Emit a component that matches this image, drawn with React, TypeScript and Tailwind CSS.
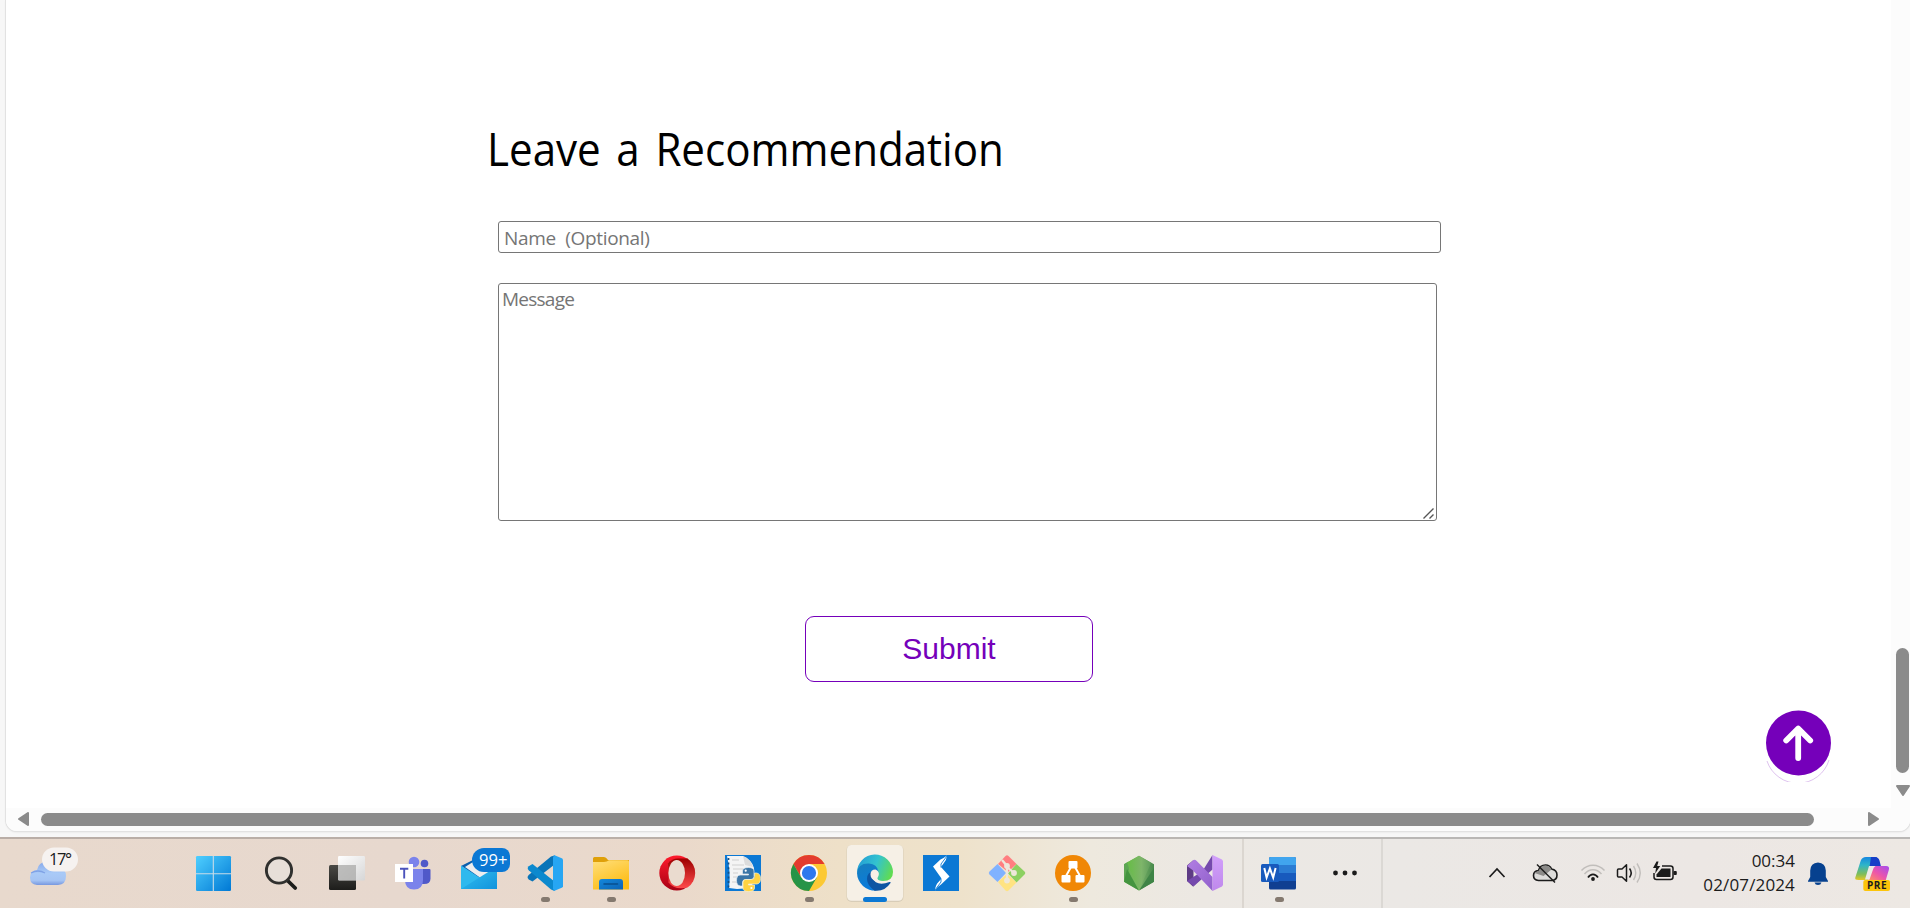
import type { ReactNode } from "react";

type Mark = "none" | "dot" | "bar";

function Cell({ x, mark = "none", active = false, children }: { x: number; mark?: Mark; active?: boolean; children: ReactNode }) {
  return (
    <svg className="h-[69px] w-[66px] shrink-0" viewBox={`${x} 839 66 69`}>
      {active && <rect x={x + 6.5} y="845" width="57" height="57" rx="5" fill="#d8cdb8" />}
      {active && <rect x={x + 7} y="845" width="56" height="55.800" rx="4.500" fill="#f6f0e6" />}
      {children}
      {mark === "dot" && <rect x={x + 31} y="897" width="9" height="5" rx="2.500" fill="#84796f" />}
      {mark === "bar" && <rect x={x + 23} y="897" width="24" height="5" rx="2.500" fill="#0b78d4" />}
    </svg>
  );
}

function Defs() {
  return (
    <svg className="absolute h-0 w-0">
      <defs>
        <linearGradient id="win" x1="0" y1="0" x2="1" y2="1" gradientUnits="objectBoundingBox"><stop stopColor="#4fcfff" /><stop offset="1" stopColor="#0078d4" /></linearGradient>
        <linearGradient id="tvd" x1="0" y1="0" x2="0" y2="1"><stop stopColor="#4a4945" /><stop offset="1" stopColor="#1d1d1b" /></linearGradient>
        <linearGradient id="tvl" x1="0" y1="0" x2="1" y2="1"><stop stopColor="#ffffff" /><stop offset="1" stopColor="#d6d6d6" /></linearGradient>
        <linearGradient id="cloud" x1="0" y1="0" x2="0" y2="1"><stop stopColor="#86a8ea" /><stop offset=".5" stopColor="#a9caf7" /><stop offset=".8" stopColor="#a5c4f4" /><stop offset="1" stopColor="#7798df" /></linearGradient>
        <linearGradient id="mail" x1="0" y1="0" x2="1" y2="1"><stop stopColor="#36c3f2" /><stop offset="1" stopColor="#1193dc" /></linearGradient>
        <linearGradient id="fold" x1="0" y1="0" x2="0.5" y2="1"><stop stopColor="#ffdf7b" /><stop offset="1" stopColor="#fdbd16" /></linearGradient>
        <linearGradient id="fblue" x1="0" y1="0" x2="1" y2="1"><stop stopColor="#1488dc" /><stop offset="1" stopColor="#0d63b4" /></linearGradient>
        <linearGradient id="opo" x1="0" y1="0" x2="0" y2="1"><stop stopColor="#ff1b2d" /><stop offset="1" stopColor="#a70014" /></linearGradient>
        <linearGradient id="opi" x1="0" y1="0" x2="0" y2="1"><stop stopColor="#9c0000" /><stop offset="1" stopColor="#ff4b4b" /></linearGradient>
        <linearGradient id="edt" x1="0" y1=".3" x2="1" y2=".6"><stop stopColor="#249ed5" /><stop offset=".5" stopColor="#33c3cf" /><stop offset="1" stopColor="#61dc50" /></linearGradient>
        <linearGradient id="edl" x1="0" y1="0" x2="0.3" y2="1"><stop stopColor="#177fbd" /><stop offset="1" stopColor="#0a7bdb" /></linearGradient>
        <linearGradient id="nod" x1="0" y1="0" x2="1" y2="0"><stop stopColor="#64b849" /><stop offset=".5" stopColor="#7eb56a" /><stop offset="1" stopColor="#47894b" /></linearGradient>
        <linearGradient id="nodm" x1="0" y1="0" x2="1" y2="0"><stop stopColor="#66bd45" /><stop offset=".6" stopColor="#7eb56a" /><stop offset="1" stopColor="#5f9c5b" /></linearGradient>
        <linearGradient id="vs" x1="0" y1="0" x2="0" y2="1"><stop stopColor="#d2a0fb" /><stop offset="1" stopColor="#bf88ec" /></linearGradient>
        <linearGradient id="vsx" x1="0" y1="0" x2="1" y2="1"><stop stopColor="#b17ee3" /><stop offset="1" stopColor="#9160cb" /></linearGradient>
        <linearGradient id="copa" x1="0" y1="0" x2="0" y2="1"><stop stopColor="#1687e0" /><stop offset=".35" stopColor="#2eb5c9" /><stop offset=".75" stopColor="#80bd58" /><stop offset="1" stopColor="#e6c725" /></linearGradient>
        <linearGradient id="copb" x1="1" y1="0" x2="0" y2="1"><stop stopColor="#a34cf0" /><stop offset=".55" stopColor="#ed55a9" /><stop offset="1" stopColor="#ff9061" /></linearGradient>
      </defs>
    </svg>
  );
}

function Weather() {
  return (
    <svg className="h-[69px] w-[180px] shrink-0" viewBox="0 839 180 69">
      <path d="M37 885q-7-.5-7-7.500t7-7.500q1.500-8 9.500-8.500 7 0 10 6.500 9.500-.5 9.500 8t-8 9z" fill="url(#cloud)" />
      <path d="M31 873q7-4 14 0" fill="none" stroke="#7fa2e6" strokeWidth="1.300" />
      <rect x="42" y="847.500" width="36" height="24" rx="12" fill="#f6f2f0" />
      <text x="49" y="865" fontSize="16.500" textLength="23" className="font-['Open_Sans',sans-serif]" fill="#1b1b1b">17°</text>
    </svg>
  );
}

function TaskbarApps() {
  return (
    <>
      <Cell x={180}>
        <rect x="196" y="856" width="35" height="35" rx="1.200" fill="url(#win)" />
        <path d="M213.300 856v35M196 873.800h35" stroke="#c8dce8" strokeWidth="1.100" />
      </Cell>
      <Cell x={246}>
        <path d="M287.500 880.500l7.700 7.500" stroke="#1d1d1b" strokeWidth="3.800" strokeLinecap="round" />
        <circle cx="279" cy="870.500" r="12.600" fill="#e7dfd8" stroke="#30302e" strokeWidth="2.900" />
      </Cell>
      <Cell x={312}>
        <rect x="329" y="865" width="27" height="25" rx="1.500" fill="url(#tvd)" />
        <rect x="338" y="856" width="27" height="24.500" rx="1.200" fill="url(#tvl)" />
        <rect x="338" y="865" width="18" height="15" fill="#a9a9a8" opacity=".75" />
      </Cell>
      <Cell x={378}>
        <circle cx="424.500" cy="863.500" r="3.800" fill="#5059c9" />
        <path d="M422 869h7.500q1 0 1 1v8.500q0 5.500-6.500 5.500h-2z" fill="#5059c9" />
        <circle cx="414" cy="862" r="5.300" fill="#7b83eb" />
        <path d="M405 869h18v11q0 9.500-9 9.500t-9-9.500z" fill="#7b83eb" />
        <rect x="395" y="864" width="18" height="18" fill="#fff" />
        <path d="M400 868.800h8.300M404.200 868v10.500" stroke="#4b53bc" strokeWidth="1.900" />
      </Cell>
      <Cell x={444}>
        <path d="M461 866l14-7h16l6 7-18 12z" fill="#0b5fae" />
        <path d="M465 867l8-5 22 4v6l-13 7z" fill="#ededee" />
        <path d="M461 865.500l36 23.500h-36z" fill="#2fb9ee" />
        <path d="M497 866.500v22.500h-36z" fill="url(#mail)" />
        <rect x="472" y="848" width="38" height="24" rx="12" fill="#0b78d4" />
        <rect x="490" y="848" width="20" height="24" rx="8" fill="#0b78d4" />
        <text x="479" y="866" fontSize="16.500" textLength="28.500" className="font-['Open_Sans',sans-serif]" fill="#fff">99+</text>
      </Cell>
      <Cell x={510} mark="dot">
        <path d="M554 865l-21.500 16.500-3.800-2.100q-2.300-2 0-4.300L551 856.500l3.500-1z" fill="#0974b8" />
        <path d="M554.500 881.500L532.500 864l-3.800 2.200q-2 2 0 4L551 889.500l3.500 1.500z" fill="#0c89ce" />
        <path d="M554 855l8.300 3.500.7 1.200v26.600l-.7 1.200L554 891l-1-2.500v-31z" fill="#27a6f3" />
      </Cell>
      <Cell x={576} mark="dot">
        <path d="M593 858.500q0-1.500 1.500-1.500h9.500q2 0 4 3h21v5h-36z" fill="#dfa009" />
        <path d="M593 862h11q3 0 5-1.700h18.500q1.500 0 1.500 1.500v27.700h-36z" fill="url(#fold)" />
        <path d="M599 889.500v-7.500q0-3 3-3h18q3 0 3 3v7.500z" fill="url(#fblue)" />
        <path d="M604 884h13.500" stroke="#084f8f" strokeWidth="1.500" strokeLinecap="round" />
      </Cell>
      <Cell x={642}>
        <ellipse cx="676.800" cy="873" rx="17.500" ry="17.500" fill="url(#opo)" />
        <path d="M668 863.500q4-5 10-5 5 0 9.500 0a17.500 17.500 0 010 29q-13 3-19-5z" fill="url(#opi)" />
        <ellipse cx="676.700" cy="873" rx="8.300" ry="13" fill="#eadbcf" />
      </Cell>
      <Cell x={708}>
        <path d="M725 855h36v36h-36z" fill="#0b78d4" />
        <path d="M727 856h16q9 4 11 12l-2 20-15 1-8-1q2-16-2-32z" fill="#f4f4f4" />
        <path d="M728.500 858v31" stroke="#174f82" strokeWidth="1.700" strokeDasharray="2 2.600" />
        <path d="M732 860h7M732 865h12M733 869h10M733 873h5M733 877h5M732 882h5" stroke="#c8c8c8" strokeWidth=".8" />
        <path d="M743 856l2 9 8 2q-2-8-10-11z" fill="#dcdcdc" />
        <path d="M748.500 867.500q-6 0-6 3.500v3h6v1h-8.500q-3.500.5-3.500 5.500t4 5.500h2v-3.500q0-3 3.500-3h5.500q2.500 0 2.500-3v-5.500q0-3.500-5.500-3.500z" fill="#3a75a7" stroke="#e7edf2" strokeWidth=".7" />
        <path d="M748.500 891.500q6 0 6-3.500v-3h-6v-1h8.500q3.500-.5 3.500-5.500t-4-5.500h-2v3.500q0 3-3.500 3h-5.500q-2.500 0-2.500 3v5.500q0 3.500 5.500 3.500z" fill="#ffd342" stroke="#f7f1d5" strokeWidth=".7" />
        <circle cx="745.700" cy="870.700" r="1.100" fill="#fff" /><circle cx="751.400" cy="888" r="1.100" fill="#fff" />
      </Cell>
      <Cell x={774} mark="dot">
        <circle cx="809" cy="873" r="18" fill="#fcc934" />
        <path d="M793.400 864a18 18 0 0131.200 0H809l-7.800 13.500z" fill="#e33b2e" />
        <path d="M793.400 864a18 18 0 0015.600 27l7.800-13.500h-15.600z" fill="#269447" />
        <circle cx="809" cy="873" r="9" fill="#fff" />
        <circle cx="809" cy="873" r="7.100" fill="#2e78ee" />
      </Cell>
      <Cell x={840} mark="bar" active>
        <path d="M857 873a18 18 0 0136-1q0 9-10 9-6 0-6-2.500l1.500-4.500q0-6-8-9.500-8-1-13.500 8.500z" fill="url(#edt)" />
        <path d="M857 873q1-10 12-9.500 8 .5 9.500 8-8-1-8 5.500 0 8 6 13.500a18 18 0 01-19.500-17.500z" fill="url(#edl)" />
        <path d="M874 871q-7 1-7 8 0 6 7.500 11.700 10 1.300 16-7.700.5-1.500-1-1-13 5-17.500-4.500-.8-3.500 2-6.500z" fill="#0d55a3" />
        <path d="M875.500 869.500q-5 0-5 5t6 7q7 2 13.500-.5-6 1.500-11-.5-3-1.800-.5-4.500 1.200-5-3-6.500z" fill="#f6f0e6" />
      </Cell>
      <Cell x={906}>
        <path d="M923 855h36v36h-36z" fill="#0b78d4" />
        <path d="M933 866.500l7.500-7q3.500-1.500 6.500-4-.5 5-3.500 8l-2.500 3.500 8.500 9.500-8.500 8q-3.500 2-6 6 .5-6 3.500-8.500l3-3.500z" fill="#fff" />
        <path d="M947 856l-6 8v3.500M935 890l6-8v-3" stroke="#0b78d4" strokeWidth=".9" fill="none" />
      </Cell>
      <Cell x={972}>
        <path d="M998 864l7.500-8q1.500-1.500 3 0l8 8-8.500 8z" fill="#ff7e80" />
        <path d="M1016.500 864l8 7.500q1.500 1.500 0 3l-8 8-8.500-9z" fill="#8cd061" />
        <path d="M998 882l9-8 9.500 8.500-8 8q-1.500 1.500-3 0z" fill="#ffe382" />
        <path d="M997.500 864l8.500 9-8.500 9-8-7.500q-1.500-1.500 0-3z" fill="#80b2ff" />
        <path d="M1002 860l5 6v15M1007 867l7 6" stroke="#eee7da" strokeWidth="2.300" fill="none" />
        <circle cx="1007" cy="866" r="2.900" fill="#eee7da" /><circle cx="1014" cy="873" r="2.900" fill="#eee7da" /><circle cx="1007" cy="880.500" r="2.900" fill="#eee7da" />
      </Cell>
      <Cell x={1038} mark="dot">
        <circle cx="1073" cy="873" r="18" fill="#f08705" />
        <path d="M1071 867l-5 9M1075 867l5 9" stroke="#fff" strokeWidth="2" />
        <rect x="1068.500" y="861" width="9" height="7.500" rx="1" fill="#fff" /><rect x="1061.500" y="875" width="9" height="7.500" rx="1" fill="#fff" /><rect x="1075.500" y="875" width="9" height="7.500" rx="1" fill="#fff" />
      </Cell>
      <Cell x={1104}>
        <path d="M1139 855.700l15 8.500v17.500l-15 8.700-15-8.700v-17.500z" fill="url(#nod)" />
        <path d="M1124 864.200l4-2.500 1 8-5 12z" fill="#5da553" />
        <path d="M1127 869l12 21.400-15-8.700z" fill="#44943f" />
        <path d="M1154 868v13.700l-15 8.700z" fill="#3f8446" />
        <path d="M1127 862.500l12-6.800 12 7-12 27.700z" fill="url(#nodm)" />
      </Cell>
      <Cell x={1170}>
        <path d="M1187 865.500l6.500-5.500v27l-6.500-6z" fill="#5e3b85" />
        <path d="M1193.500 885.500l19-30.500v14.500l-18.500 16.500z" fill="#7549ad" />
        <path d="M1187 881l6.500 5 10-9-4-4z" fill="#7549ad" />
        <path d="M1187 866l6.500-6q1.500-.7 3 .7L1212.500 877v14l-20-21z" fill="url(#vsx)" />
        <path d="M1212.500 855l9.500 4.500 1 1.500v24l-1 1.500-9.500 4.500z" fill="url(#vs)" />
      </Cell>
    </>
  );
}

function WordAndMore() {
  return (
    <>
      <div className="ml-[6px] h-[69px] w-[2px] shrink-0 bg-[#dbd6d0]" />
      <Cell x={1244} mark="dot">
        <rect x="1269" y="857" width="27" height="32.500" rx="1.500" fill="#103f91" />
        <path d="M1269 865h27v16h-27z" fill="#185abd" />
        <path d="M1269 865h27v8h-27z" fill="#2b7cd3" />
        <path d="M1270.500 857h24q1.500 0 1.500 1.500v6.500h-27v-6.500q0-1.500 1.500-1.500z" fill="#41a5ee" />
        <rect x="1261" y="864" width="18" height="18" rx="1.500" fill="#185abd" />
        <path d="M1264.300 868l2.300 9.500 3.300-9 3.300 9 2.400-9.500" fill="none" stroke="#fff" strokeWidth="2" />
      </Cell>
      <Cell x={1310}>
        <circle cx="1335.500" cy="873" r="2.400" fill="#1b1b1b" /><circle cx="1345" cy="873" r="2.400" fill="#1b1b1b" /><circle cx="1354.500" cy="873" r="2.400" fill="#1b1b1b" />
      </Cell>
      <div className="ml-[5px] h-[69px] w-[2px] shrink-0 bg-[#dbd8d4]" />
    </>
  );
}

function Tray() {
  return (
    <svg className="h-[69px] w-[230px] shrink-0" viewBox="1460 839 230 69" fill="none" stroke="#1b1b1b">
      <path d="M1489.500 877l7.500-8 7.500 8" strokeWidth="1.700" />
      <path d="M1538.500 880.500q-5-.5-5-5t5-5q1.500-5.500 7-5.500 4.500 0 6 4 5.500 1 5.500 6t-5 5.500z" fill="#dddcda" strokeWidth="1.600" />
      <path d="M1539 870.500q1.500-5 6.500-5 4 0 6 4l-8 6.500-9-3z" fill="#8c8b89" stroke="none" />
      <path d="M1537 864.500l18 18" strokeWidth="1.500" />
      <path d="M1581.500 870.500q5-5.300 11.500-5.300t11.500 5.300M1584.500 874q3.800-4.200 8.500-4.200t8.500 4.200" stroke="#c1bebb" strokeWidth="1.500" />
      <path d="M1588 877.500q2-3.200 5-3.200t5 3.200" strokeWidth="1.700" />
      <circle cx="1593" cy="879" r="1.900" fill="#1b1b1b" stroke="none" />
      <path d="M1617.500 870q0-1 1-1h3.500l4.500-4.200v16.400l-4.500-4.200h-3.500q-1 0-1-1z" strokeWidth="1.500" strokeLinejoin="round" />
      <path d="M1629.500 868.500q3.500 4.500 0 9" strokeWidth="1.600" />
      <path d="M1633.500 866q4.500 7 0 14M1637 863.500q6.500 9.500 0 19" stroke="#c1bebb" strokeWidth="1.400" />
      <path d="M1662 866h8.500q2.500 0 2.500 2.500v8.500q0 2.500-2.500 2.500h-14q-2.500 0-2.500-2.500v-4" strokeWidth="1.500" />
      <path d="M1661.500 868.500h9v8.500h-14v-2.500z" fill="#1b1b1b" stroke="none" />
      <rect x="1673.500" y="871" width="3.300" height="4" rx="1" fill="#1b1b1b" stroke="none" />
      <path d="M1656.500 861.500l-3.500 6.500h3l-.8 5.500 5-7.500h-3l1.300-4.500z" fill="#1b1b1b" stroke="none" />
    </svg>
  );
}

function Notifications() {
  return (
    <svg className="h-[69px] w-[115px] shrink-0" viewBox="1795 839 115 69">
      <path d="M1818 862.500q7.500.5 7.800 8v6.500l2.200 4v.7h-20v-.7l2.200-4v-6.500q.3-7.500 7.800-8z" fill="#06418f" />
      <path d="M1814.500 882.500h7q-.8 2.500-3.500 2.500t-3.500-2.500z" fill="#06418f" />
      <path d="M1855.300 877.500l5.500-17q1.300-3.500 5.200-3.500h11l-5 10-4 13h-9.500q-4 0-3.200-2.500z" fill="url(#copa)" />
      <path d="M1871 857h4q3.500 0 4.500 3.500l1.500 6h-6.500l-5 .5z" fill="#153ec8" />
      <path d="M1874 866h12q4 0 2.800 4l-3 10h-17.500l4-11q.7-3 1.700-3z" fill="url(#copb)" />
      <path d="M1869 866h6.500q-2 1-3 5l-3 8.500h-4.500z" fill="#ece9e6" />
      <rect x="1863.300" y="880" width="26.700" height="11" rx="2" fill="#fcc50b" />
      <text x="1867" y="889" fontSize="10" fontWeight="700" textLength="19.500" className="font-['Open_Sans',sans-serif]" fill="#1b1b1b">PRE</text>
    </svg>
  );
}

function ScrollBarBottom() {
  return (
    <div className="flex h-[23px] items-center bg-[#fcfcfc] pb-px pl-[12px]">
      <svg className="h-[14px] w-[11px]" viewBox="0 0 11 14"><path d="M10 1v12L1 7z" fill="#8b8b8b" stroke="#8b8b8b" strokeWidth="2" strokeLinejoin="round" /></svg>
      <div className="ml-[12px] h-[13px] w-[1773px] rounded-full bg-[#8b8b8b]" />
      <svg className="ml-[54px] h-[14px] w-[11px]" viewBox="0 0 11 14"><path d="M1 1v12l9-6z" fill="#8b8b8b" stroke="#8b8b8b" strokeWidth="2" strokeLinejoin="round" /></svg>
    </div>
  );
}

export default function App() {
  return (
    <div className="relative flex h-[908px] w-full flex-col overflow-hidden bg-[#f7f7f7]">
      <Defs />
      <div className="flex h-[837px] shrink-0 flex-col pl-[6px]">
        <div className="flex h-[831px] flex-col overflow-hidden rounded-b-[11px] bg-white shadow-[0_0_0_1px_#e2e2e2,0_1px_2px_#d8d8d8]">
          <div className="flex h-[808px] shrink-0">
            <main className="w-[1885px] shrink-0 pl-[481px]">
              <h1 className="mt-[117px] h-[64px] origin-left scale-x-[0.94] whitespace-nowrap font-['Open_Sans',sans-serif] text-[44.8px] font-[450] leading-[64px] text-black [word-spacing:5px]">Leave a Recommendation</h1>
              <form className="flex flex-col pl-[11px]" onSubmit={(e) => e.preventDefault()}>
                <input className="mt-[40px] h-[32px] w-[943px] rounded-[3px] border border-[#767676] bg-white px-[5px] pt-[1px] font-['Open_Sans',sans-serif] text-[19px] font-medium tracking-[-0.35px] outline-none [word-spacing:5px] placeholder:text-[#757575]" placeholder="Name (Optional)" />
                <div className="relative mt-[30px] h-[238px] w-[939px]">
                  <textarea className="block h-full w-full resize-none rounded-[3px] border border-[#767676] bg-white px-[3px] py-[2px] font-['Open_Sans',sans-serif] text-[19px] font-medium leading-[26px] tracking-[-0.75px] outline-none placeholder:text-[#757575]" placeholder="Message" />
                  <svg className="absolute bottom-[2px] right-[3px] h-[11px] w-[11px]" viewBox="0 0 11 11"><path d="M.5 10.500l10-10M6.500 10.500l4-4" stroke="#555" strokeWidth="1.400" /></svg>
                </div>
                <button className="ml-[307px] mt-[95px] h-[66px] w-[288px] rounded-[9px] border border-[#7500ba] bg-white pb-[2px] font-['Liberation_Sans',sans-serif] text-[30px] text-[#7500ba]">Submit</button>
              </form>
            </main>
            <div className="flex flex-col items-start bg-[#fcfcfc] pl-[4.5px] pt-[648px]">
              <div className="ml-[0.5px] h-[125px] w-[13px] rounded-full bg-[#8b8b8b]" />
              <svg className="mt-[12px] h-[11px] w-[14px]" viewBox="0 0 14 11"><path d="M1 1h12L7 10z" fill="#8b8b8b" stroke="#8b8b8b" strokeWidth="2" strokeLinejoin="round" /></svg>
            </div>
          </div>
          <ScrollBarBottom />
        </div>
      </div>
      <div className="h-[2px] shrink-0 bg-[linear-gradient(90deg,#b9ada6,#bbb1a9_50%,#b9b7b5_65%)]" />
      <div className="flex h-[69px] shrink-0 bg-[linear-gradient(90deg,#e8d9cd_0px,#e7d8ce_400px,#ead9cb_680px,#eee0c8_840px,#eee2cb_960px,#eee9de_1090px,#ece8e3_1200px,#ebe8e5_1400px,#ece7e4_1700px,#ede8e3_1910px)]">
        <Weather />
        <TaskbarApps />
        <WordAndMore />
        <div className="w-[77px] shrink-0" />
        <Tray />
        <div className="w-[105px] shrink-0 pt-[10px] text-right font-['Open_Sans',sans-serif] text-[17px] leading-[24px] text-[#1b1b1b]">
          <div>00:34</div>
          <div className="-ml-2 tracking-[0.15px]">02/07/2024</div>
        </div>
        <Notifications />
      </div>
      <a className="absolute left-[1766px] top-[710px] h-[72px] w-[66px]" href="#top" aria-label="Back to top">
        <svg className="h-[72px] w-[66px]" viewBox="0 0 66 72">
          <path d="M1 54a32.500 32.500 0 0062-1" fill="none" stroke="#c79be2" strokeWidth=".6" transform="translate(0 -3)" />
          <circle cx="32.500" cy="33" r="32.500" fill="#7500ba" />
          <path d="M32.500 49V20M20.500 31.500l12-12 12 12" stroke="#fff" strokeWidth="5.800" strokeLinecap="round" strokeLinejoin="round" fill="none" transform="translate(-.3 -1)" />
        </svg>
      </a>
    </div>
  );
}
